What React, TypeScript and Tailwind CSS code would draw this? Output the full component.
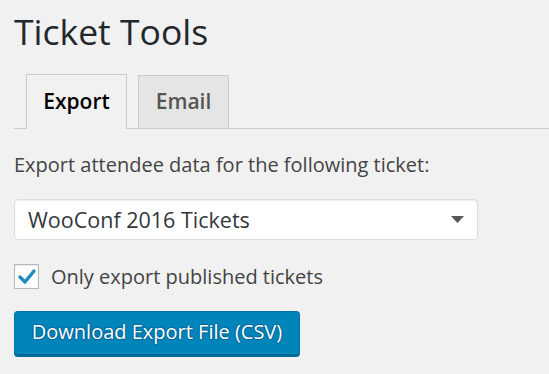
import React from "react";

export default function App() {
  return (
    <div className="w-[549px] h-[374px] bg-[#f1f1f1] pl-[14px] pt-[8px] overflow-hidden" style={{ fontFamily: '"Open Sans", sans-serif' }}>
      <h1 className="text-[35.5px] leading-[46px] text-[#23282d] font-normal">Ticket Tools</h1>
      <div className="mt-[20px] flex items-end border-b border-[#ccc] pl-[12px] h-[55px]">
        <div className="h-[55px] w-[101px] border border-[#ccc] border-b-0 bg-[#f1f1f1] -mb-px flex items-center justify-center text-[21px] font-semibold text-black pb-[1px]">
          Export
        </div>
        <div className="ml-[11px] h-[53px] w-[91px] border border-[#ccc] border-b-0 bg-[#e5e5e5] flex items-center justify-center text-[21px] font-semibold text-[#555]">
          Email
        </div>
      </div>
      <p className="mt-[23px] text-[20px] leading-[26px] text-[#444]">Export attendee data for the following ticket:</p>
      <div className="mt-[21px] w-[464px] h-[41px] bg-white border border-[#ddd] rounded-[4px] shadow-[inset_0_1px_2px_rgba(0,0,0,0.07)] flex items-center justify-between pl-[13px] pr-[13px]">
        <span className="text-[21.5px] leading-[30px] text-[#32373c]">WooConf 2016 Tickets</span>
        <svg width="13" height="7" viewBox="0 0 13 7"><path d="M0 0 H13 L6.5 7 Z" fill="#555" /></svg>
      </div>
      <div className="mt-[24px] flex items-center h-[25px]">
        <div className="w-[25px] h-[25px] bg-white border border-[#b4b9be] flex items-center justify-center shadow-[inset_0_1px_2px_rgba(0,0,0,0.1)]">
          <svg width="20" height="18" viewBox="0 0 20 18"><path d="M3 9 L8 14 L17 3" stroke="#1e8cbe" strokeWidth="3.4" fill="none" strokeLinecap="round" strokeLinejoin="round" /></svg>
        </div>
        <span className="ml-[12px] text-[20px] leading-[25px] text-[#444]">Only export published tickets</span>
      </div>
      <button className="mt-[22px] w-[286px] h-[44px] bg-[#0085ba] border border-[#0073aa] border-b-[#006799] rounded-[4px] shadow-[0_2px_0_#006799] text-white text-[20px] flex items-center justify-center pb-[2px]" style={{ textShadow: "0 -1px 1px #006799, 1px 0 1px #006799, 0 1px 1px #006799, -1px 0 1px #006799" }}>
        Download Export File (CSV)
      </button>
    </div>
  );
}
